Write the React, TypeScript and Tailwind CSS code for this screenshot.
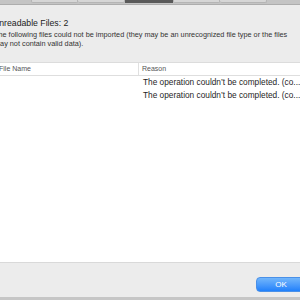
export default function App() {
  return (
    <div
      className="relative w-[300px] h-[300px] overflow-hidden bg-[#ececec] text-[#2b2b2b]"
      style={{ fontFamily: '"Liberation Sans", Arial, sans-serif' }}
    >
      {/* Toolbar strip */}
      <div className="h-[5px] bg-[#c4c4c4] border-b border-[#adadad] flex">
        <div className="w-[31px]" />
        <div className="w-[47px] h-[3px] bg-[#d6d6d6] border-x border-b border-[#b5b5b5] rounded-b-[2px]" />
        <div className="w-[47px] h-[3px] bg-[#d6d6d6] border-b border-r border-[#b5b5b5] rounded-b-[2px]" />
        <div className="w-[48px] h-[3px] bg-[#5a5a5a]" />
        <div className="w-[47px] h-[3px] bg-[#d6d6d6] border-x border-b border-[#b5b5b5] rounded-b-[2px]" />
        <div className="w-[47px] h-[3px] bg-[#d6d6d6] border-r border-b border-[#b5b5b5] rounded-b-[2px]" />
      </div>

      {/* Message */}
      <div className="ml-[-7px] pt-[13px] whitespace-nowrap">
        <div className="text-[8.7px] leading-[11px] text-[#222]">Unreadable Files: 2</div>
        <div className="mt-[1px] ml-[1px] text-[7.3px] leading-[9px] text-[#333]">
          <div>The following files could not be imported (they may be an unrecognized file type or the files</div>
          <div>may not contain valid data).</div>
        </div>
      </div>

      {/* Table */}
      <div className="absolute left-0 right-0 top-[62px] h-[200px] bg-white border-t border-[#dcdcdc]">
        <div className="flex h-[13px] border-b border-[#dedede] text-[7px] leading-[12px] text-[#555]">
          <div className="w-[140px] ml-[-1px] border-r border-[#e0e0e0]">File Name</div>
          <div className="pl-[3px]">Reason</div>
        </div>
        <div className="pl-[143px] text-[8.3px] leading-[13px] text-[#1e1e1e] whitespace-nowrap">
          <div>The operation couldn’t be completed. (co...</div>
          <div>The operation couldn’t be completed. (co...</div>
        </div>
      </div>

      {/* Bottom bar */}
      <div className="absolute left-0 right-0 top-[262px] h-[35px] border-t border-[#d9d9d9] bg-[#ececec]">
        <div className="absolute left-[256px] top-[14px] w-[52px] h-[15px] rounded-[4px] bg-gradient-to-b from-[#72b6fb] to-[#1f80fb] border border-[#4a90e8] text-white text-[8px] leading-[13px] text-center pr-[2px]">
          OK
        </div>
      </div>
      <div className="absolute left-0 right-0 top-[297px] h-[3px] bg-[#c6c6c6]" />
    </div>
  );
}
